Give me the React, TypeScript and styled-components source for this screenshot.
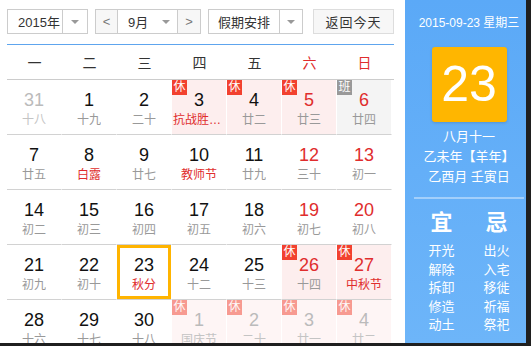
import React, { FC } from "react";
import styled, { createGlobalStyle, css } from "styled-components";

const GlobalStyle = createGlobalStyle`
  body {
    margin: 0;
    background: #1f1f1f;
    font-family: "Liberation Sans", "Noto Sans CJK SC", sans-serif;
  }
`;

interface Day {
  num: number;
  lunar: string;
  other?: boolean; // 非本月
  weekend?: boolean;
  fest?: boolean; // 节日红字
  badge?: "休" | "班";
  today?: boolean;
}

const rows: Day[][] = [
  [
    { num: 31, lunar: "十八", other: true },
    { num: 1, lunar: "十九" },
    { num: 2, lunar: "二十" },
    { num: 3, lunar: "抗战胜利纪念日", fest: true, badge: "休" },
    { num: 4, lunar: "廿二", badge: "休" },
    { num: 5, lunar: "廿三", weekend: true, badge: "休" },
    { num: 6, lunar: "廿四", weekend: true, badge: "班" },
  ],
  [
    { num: 7, lunar: "廿五" },
    { num: 8, lunar: "白露", fest: true },
    { num: 9, lunar: "廿七" },
    { num: 10, lunar: "教师节", fest: true },
    { num: 11, lunar: "廿九" },
    { num: 12, lunar: "三十", weekend: true },
    { num: 13, lunar: "初一", weekend: true },
  ],
  [
    { num: 14, lunar: "初二" },
    { num: 15, lunar: "初三" },
    { num: 16, lunar: "初四" },
    { num: 17, lunar: "初五" },
    { num: 18, lunar: "初六" },
    { num: 19, lunar: "初七", weekend: true },
    { num: 20, lunar: "初八", weekend: true },
  ],
  [
    { num: 21, lunar: "初九" },
    { num: 22, lunar: "初十" },
    { num: 23, lunar: "秋分", fest: true, today: true },
    { num: 24, lunar: "十二" },
    { num: 25, lunar: "十三" },
    { num: 26, lunar: "十四", weekend: true, badge: "休" },
    { num: 27, lunar: "中秋节", weekend: true, fest: true, badge: "休" },
  ],
  [
    { num: 28, lunar: "十六" },
    { num: 29, lunar: "十七" },
    { num: 30, lunar: "十八" },
    { num: 1, lunar: "国庆节", other: true, badge: "休" },
    { num: 2, lunar: "二十", other: true, badge: "休" },
    { num: 3, lunar: "廿一", other: true, badge: "休" },
    { num: 4, lunar: "廿二", other: true, badge: "休" },
  ],
];

const weekNames = ["一", "二", "三", "四", "五", "六", "日"];
const yi = ["开光", "解除", "拆卸", "修造", "动土"];
const ji = ["出火", "入宅", "移徙", "祈福", "祭祀"];

// 外框
const Frame = styled.div`
  width: 526px;
  height: 343px;
  display: flex;
  background: #fff;
  overflow: hidden;
`;

// 左边日历
const Left = styled.div`
  flex: 0 0 403px;
  box-sizing: border-box;
  padding: 9px 11px 0 7px;
`;

const Toolbar = styled.div`
  display: flex;
  height: 25px;
  font-size: 13px;
  color: #333;
`;

const Box = styled.div<{ $ml?: number }>`
  display: flex;
  height: 25px;
  box-sizing: border-box;
  border: 1px solid #ccc;
  background: #fff;
  margin-left: ${(p) => p.$ml || 0}px;
`;

const BoxText = styled.div<{ $w: number; $pl?: number }>`
  width: ${(p) => p.$w}px;
  display: flex;
  align-items: center;
  justify-content: ${(p) => (p.$pl ? "flex-start" : "center")};
  padding-left: ${(p) => p.$pl || 0}px;
  box-sizing: border-box;
`;

const Caret = styled.div<{ $w: number; $line?: boolean }>`
  width: ${(p) => p.$w}px;
  display: flex;
  align-items: center;
  justify-content: center;
  border-left: ${(p) => (p.$line ? "1px solid #ccc" : "none")};
  &::after {
    content: "";
    border-left: 4px solid transparent;
    border-right: 4px solid transparent;
    border-top: 4px solid #999;
  }
`;

const ArrowBtn = styled.div<{ $w: number; $side: "l" | "r" }>`
  width: ${(p) => p.$w}px;
  display: flex;
  align-items: center;
  justify-content: center;
  background: #f7f7f7;
  color: #777;
  ${(p) =>
    p.$side === "l"
      ? css`
          border-right: 1px solid #ccc;
        `
      : css`
          border-left: 1px solid #ccc;
        `}
`;

const TodayBtn = styled.div`
  margin-left: 10px;
  width: 81px;
  height: 25px;
  box-sizing: border-box;
  border: 1px solid #ddd;
  background: #f7f7f7;
  display: flex;
  align-items: center;
  justify-content: center;
  letter-spacing: 1px;
`;

const WeekHead = styled.div`
  margin-top: 10px;
  height: 36px;
  box-sizing: border-box;
  border-top: 1px solid #5ea5ee;
  border-bottom: 1px solid #ccc;
  display: grid;
  grid-template-columns: repeat(7, 55px);
  align-items: center;
  font-size: 14px;
`;

const WeekName = styled.div<{ $red: boolean }>`
  text-align: center;
  color: ${(p) => (p.$red ? "#e02d2d" : "#333")};
`;

const Grid = styled.div`
  display: grid;
  grid-template-columns: repeat(7, 55px);
  grid-auto-rows: 55px;
`;

const Cell = styled.div<{ $bg: string; $today: boolean; $fade: boolean }>`
  position: relative;
  box-sizing: border-box;
  border-bottom: 1px solid #d2d2d2;
  border-right: 1px solid #fff;
  background: ${(p) => p.$bg};
  display: flex;
  flex-direction: column;
  align-items: center;
  padding-top: 10px;
  ${(p) =>
    p.$today &&
    css`
      &::after {
        content: "";
        position: absolute;
        inset: 0;
        border: 3px solid #ffb400;
      }
    `}
  ${(p) =>
    p.$fade &&
    css`
      & > span {
        opacity: 0.5;
      }
    `}
`;

const Num = styled.div<{ $color: string }>`
  font-size: 18px;
  line-height: 20px;
  color: ${(p) => p.$color};
`;

const Lunar = styled.div<{ $color: string }>`
  margin-top: 2px;
  font-size: 12px;
  line-height: 16px;
  max-width: 52px;
  white-space: nowrap;
  overflow: hidden;
  text-overflow: ellipsis;
  color: ${(p) => p.$color};
`;

const Badge = styled.span<{ $gray: boolean }>`
  position: absolute;
  left: 0;
  top: 0;
  width: 15px;
  height: 15px;
  font-size: 12px;
  line-height: 15px;
  text-align: center;
  color: #fff;
  background: ${(p) => (p.$gray ? "#999" : "#f2412f")};
`;

// 右边信息栏
const Side = styled.div`
  flex: 0 0 128px;
  background: linear-gradient(#5ba9f7, #6db5f9);
  color: #fff;
  display: flex;
  flex-direction: column;
  align-items: center;
`;

const DateLine = styled.div`
  margin-top: 14px;
  font-size: 12px;
  line-height: 18px;
  white-space: nowrap;
`;

const BigDay = styled.div`
  margin-top: 15px;
  width: 75px;
  height: 75px;
  border-radius: 3px;
  background: #ffb600;
  box-shadow: 0 1px 3px rgba(0, 0, 0, 0.15);
  font-size: 50px;
  line-height: 75px;
  text-align: center;
`;

const LunarInfo = styled.div`
  margin-top: 5px;
  font-size: 13px;
  line-height: 20px;
  text-align: center;
`;

const Divider = styled.div`
  margin-top: 10px;
  width: 110px;
  height: 2px;
  background: rgba(255, 255, 255, 0.4);
`;

const YiJi = styled.div`
  margin-top: 11px;
  display: grid;
  grid-template-columns: 55px 55px;
  text-align: center;
`;

const YiJiTitle = styled.div`
  font-size: 22px;
  line-height: 26px;
  font-weight: bold;
  margin-bottom: 6px;
`;

const YiJiItem = styled.div`
  font-size: 13px;
  line-height: 18.5px;
`;

const DayCell: FC<{ d: Day }> = ({ d }) => {
  const pink = d.badge === "休";
  let bg = "transparent";
  if (pink) bg = d.other ? "#fef5f5" : "#fdeeee";
  if (d.badge === "班") bg = "#f4f4f4";
  const numColor = d.other ? "#bbb" : d.weekend ? "#e02d2d" : "#111";
  const lunarColor = d.other ? "#c4c4c4" : d.fest ? "#e02d2d" : "#999";
  return (
    <Cell $bg={bg} $today={!!d.today} $fade={!!d.other}>
      {d.badge && <Badge $gray={d.badge === "班"}>{d.badge}</Badge>}
      <Num $color={numColor}>{d.num}</Num>
      <Lunar $color={lunarColor}>{d.lunar}</Lunar>
    </Cell>
  );
};

const App: FC = () => {
  return (
    <>
      <GlobalStyle />
      <Frame>
        <Left>
          <Toolbar>
            <Box>
              <BoxText $w={54} $pl={10}>
                2015年
              </BoxText>
              <Caret $w={24} $line />
            </Box>
            <Box $ml={7}>
              <ArrowBtn $w={21} $side="l">
                &lt;
              </ArrowBtn>
              <BoxText $w={37} $pl={10}>
                9月
              </BoxText>
              <Caret $w={22} />
              <ArrowBtn $w={22} $side="r">
                &gt;
              </ArrowBtn>
            </Box>
            <Box $ml={7}>
              <BoxText $w={70}>假期安排</BoxText>
              <Caret $w={22} $line />
            </Box>
            <TodayBtn>返回今天</TodayBtn>
          </Toolbar>
          <WeekHead>
            {weekNames.map((w, i) => (
              <WeekName key={w} $red={i >= 5}>
                {w}
              </WeekName>
            ))}
          </WeekHead>
          <Grid>
            {rows.flat().map((d, i) => (
              <DayCell key={i} d={d} />
            ))}
          </Grid>
        </Left>
        <Side>
          <DateLine>2015-09-23 星期三</DateLine>
          <BigDay>23</BigDay>
          <LunarInfo>
            八月十一
            <br />
            乙未年【羊年】
            <br />
            乙酉月 壬寅日
          </LunarInfo>
          <Divider />
          <YiJi>
            <div>
              <YiJiTitle>宜</YiJiTitle>
              {yi.map((t) => (
                <YiJiItem key={t}>{t}</YiJiItem>
              ))}
            </div>
            <div>
              <YiJiTitle>忌</YiJiTitle>
              {ji.map((t) => (
                <YiJiItem key={t}>{t}</YiJiItem>
              ))}
            </div>
          </YiJi>
        </Side>
      </Frame>
    </>
  );
};

export default App;
